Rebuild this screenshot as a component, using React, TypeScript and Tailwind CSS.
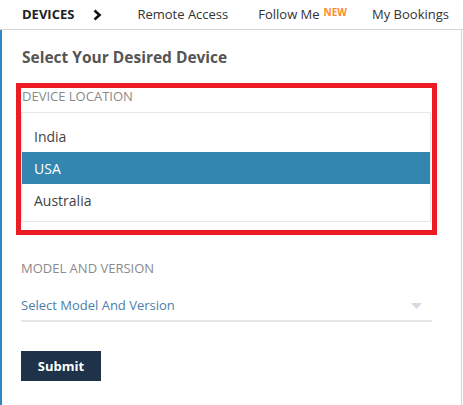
import React from "react";

const locations = ["India", "USA", "Australia"];

export default function App() {
  const selected = "USA";

  return (
    <div className="w-[463px] h-[405px] bg-white overflow-hidden" style={{ fontFamily: '"Open Sans", "Liberation Sans", sans-serif' }}>
      {/* top tabs */}
      <div className="h-[30px] flex items-center whitespace-nowrap border-b border-[#d4d4d4] text-[#333] text-[13px]">
        <span className="ml-[22px] font-bold text-[13px] text-[#222]">DEVICES</span>
        <svg className="ml-[19px] shrink-0" width="9" height="12" viewBox="0 0 9 12">
          <path d="M1.5 1.5 L6.5 6 L1.5 10.5" fill="none" stroke="#111" strokeWidth="2.6" />
        </svg>
        <span className="ml-[35px]">Remote Access</span>
        <span className="ml-[30px]">
          Follow Me
          <sup className="ml-[4px] text-[10px] font-bold text-[#ff8a2b] relative -top-[3px]">NEW</sup>
        </span>
        <span className="ml-[25px]">My Bookings</span>
      </div>

      {/* panel */}
      <div className="h-[375px] border-l-2 border-l-[#2f86c3] border-r border-r-[#d4d4d4] mr-[1px]">
        <h2 className="pl-[20px] pt-[16px] text-[15.5px] font-bold text-[#555]">Select Your Desired Device</h2>

        <div className="ml-[14px] mt-[14px] w-[421px] border-[5px] border-[#ec1c24] pb-[8px] pr-[1px]">
          <div className="pl-[1px] text-[13px] text-[#8a8a8a] leading-[16px]">DEVICE LOCATION</div>
          <ul className="mt-[8px] border border-[#e6e6e6] pt-[7px] pb-[5px] text-[14px] text-[#444]">
            {locations.map((loc) => (
              <li
                key={loc}
                className={`h-[32px] flex items-center pl-[12px] ${loc === selected ? "bg-[#3386b0] text-white" : ""}`}
              >
                {loc}
              </li>
            ))}
          </ul>
        </div>

        <div className="pl-[19px] pr-[29px] mt-[25px]">
          <div className="text-[13px] text-[#8a8a8a] leading-[16px]">MODEL AND VERSION</div>
          <div className="mt-[14px] h-[32px] flex items-center justify-between border-b-2 border-[#e6e6e6]">
            <span className="text-[13px] text-[#4a80ab]">Select Model And Version</span>
            <svg className="mr-[10px] mt-[2px]" width="11" height="6" viewBox="0 0 11 6">
              <path d="M0 0 L11 0 L5.5 6 Z" fill="#d5dbe3" />
            </svg>
          </div>
          <button className="mt-[29px] w-[80px] h-[30px] bg-[#1e3249] text-white text-[13px] font-bold">
            Submit
          </button>
        </div>
      </div>
    </div>
  );
}
